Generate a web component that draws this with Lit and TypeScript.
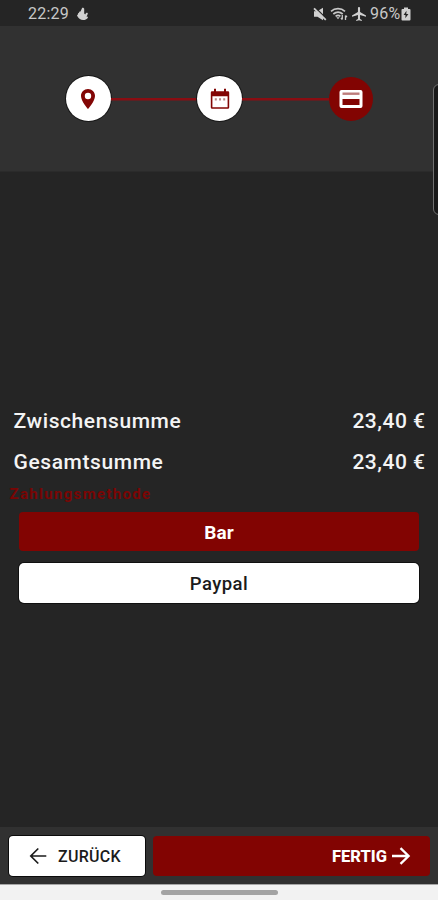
import { LitElement, html, css } from "lit";
import { customElement } from "lit/decorators.js";

@customElement("app-root")
export class AppRoot extends LitElement {
  static styles = css`
    :host {
      display: flex;
      flex-direction: column;
      position: relative;
      height: 900px;
      overflow: hidden;
      background: #252525;
      color: #f4f4f4;
      font-family: Roboto, "Noto Sans", sans-serif;
    }
    * { box-sizing: border-box; }
    svg { display: block; flex: none; }
    .status {
      height: 26px;
      flex: none;
      display: flex;
      align-items: center;
      padding: 1px 27px 0 28px;
      color: #c8c8c8;
      font-size: 16px;
    }
    .clock { width: 48px; letter-spacing: 0.2px; }
    .right { margin-left: auto; display: flex; align-items: center; gap: 3.5px; }
    .percent { margin: 0 -3px 0 0.5px; letter-spacing: 0.3px; }
    .header {
      height: 146px;
      flex: none;
      background: #313131;
      border-bottom: 1px solid #2b2b2b;
      display: flex;
      align-items: flex-start;
      padding: 50px 65.5px 0;
    }
    .step {
      width: 45px;
      height: 45px;
      flex: none;
      border-radius: 50%;
      background: #fff;
      color: #820605;
      box-shadow: 0 0 0 1px #171717;
      display: flex;
      align-items: center;
      justify-content: center;
    }
    .step.active {
      width: 44px;
      height: 44px;
      margin-top: 1px;
      background: #820402;
      color: #fff;
      box-shadow: none;
    }
    .line {
      flex: 1;
      height: 3px;
      margin-top: 21.5px;
      background: linear-gradient(#8a0d12 0 2px, #5e1f22 2px);
    }
    .main { flex: 1; padding: 238px 0 0; }
    .row {
      display: flex;
      justify-content: space-between;
      height: 41px;
      padding: 0 13px 0 13.5px;
      font-size: 21px;
      line-height: 22px;
      font-weight: 500;
      letter-spacing: 0.6px;
    }
    .amount { letter-spacing: 0.5px; margin-right: -0.5px; }
    .label {
      height: 20px;
      margin-top: -8px;
      padding-left: 9.5px;
      color: #7a0504;
      font-size: 15px;
      line-height: 20px;
      font-weight: 700;
      letter-spacing: 1.32px;
    }
    .options { display: flex; flex-direction: column; gap: 12px; padding: 8px 19px 0; }
    .option {
      height: 39px;
      border-radius: 4px;
      background: #820402;
      color: #fff;
      display: flex;
      align-items: center;
      justify-content: center;
      padding-top: 1px;
      font-size: 19px;
      font-weight: 700;
    }
    .option.plain {
      height: 40px;
      background: #fff;
      color: #1b1b1b;
      font-size: 18.5px;
      font-weight: 500;
      letter-spacing: 0.45px;
      border-radius: 5px;
      box-shadow: 0 0 0 1px #101010;
    }
    .footer {
      height: 57px;
      flex: none;
      background: #313131;
      display: flex;
      gap: 8px;
      padding: 9px 8px 0 9px;
      font-size: 16px;
    }
    .back, .done {
      height: 40px;
      border-radius: 4px;
      display: flex;
      align-items: center;
    }
    .back {
      width: 136px;
      background: #fff;
      color: #1b1b1b;
      box-shadow: 0 0 0 1px #0b0b0b;
      padding-left: 20px;
      gap: 11px;
      font-weight: 500;
      letter-spacing: 0.3px;
    }
    .done {
      flex: 1;
      background: #820402;
      color: #fff;
      justify-content: flex-end;
      padding-right: 19px;
      gap: 4px;
      font-size: 16.5px;
      font-weight: 800;
    }
    .nav {
      height: 16px;
      flex: none;
      background: #f2f2f2;
      border-top: 1px solid #a6a6a6;
      display: flex;
      justify-content: center;
      padding-top: 5px;
    }
    .handle { width: 117px; height: 5px; border-radius: 3px; background: #a3a3a3; }
    .edge {
      position: absolute;
      top: 84px;
      right: -8px;
      width: 13px;
      height: 131px;
      border: 1.5px solid #707070;
      border-radius: 6px;
      background: #191919;
    }
  `;

  render() {
    return html`
      <div class="status">
        <span class="clock">22:29</span>
        <svg width="13" height="14" viewBox="0 0 13 14" fill="#d0d0d0">
          <path d="M6.200.8c1-.4 2 .2 2 1.300v4.400l1 .9c.5-1.200 1.200-1.900 2-1.700.8.3.7 1.100.2 2l-.9 1.800 1.300.2c.7 1-.9 2.600-3.100 3.200C5.500 13.700 3 12 1.600 9.500.8 8.500 1 7.600 2 7.400c-.2-1 .3-1.600 1-1.700.1-.9.6-1.400 1.500-1.300z"/>
        </svg>
        <div class="right">
          <svg width="14" height="14" viewBox="0 0 14 14">
            <path d="M1 4.200h3.200L10 .8v12.400L4.500 9.800H1z" fill="#d0d0d0"/>
            <path d="M2.600.9l11 11" stroke="#252525" stroke-width="1.400"/>
            <path d="M1 1.300l11.800 11.500" stroke="#d0d0d0" stroke-width="1.800"/>
          </svg>
          <svg width="18" height="14" viewBox="0 0 18 14" fill="none" stroke="#c8c8c8" stroke-width="1.700">
            <path d="M1 4.300c4-3.600 10-3.600 14 0M3.300 7c3-2.500 6.500-2.500 9.400 0M5.600 9.400c1.600-1.300 3.300-1.300 4.800 0"/>
            <path d="M6.300 10.200h3.400L8 12.200z" fill="#c8c8c8" stroke="none"/>
            <path d="M12.300 8v4.500M10.900 11l1.400 1.500M15.500 13V8.500M17 10l-1.500-1.500" stroke-width="1.300"/>
          </svg>
          <svg width="14" height="14" viewBox="2 2 20 20" fill="#d0d0d0">
            <path d="M22 16v-2l-8.500-5V3.500C13.500 2.670 12.830 2 12 2s-1.500.67-1.500 1.500V9L2 14v2l8.500-2.500V19L8 20.500V22l4-1 4 1v-1.500L13.500 19v-5.500L22 16z"/>
          </svg>
          <span class="percent">96%</span>
          <svg width="10" height="14" viewBox="0 0 10 14">
            <path d="M3 .5h4v1.500h1.500q1 0 1 1v9.500q0 1-1 1H1.500q-1 0-1-1V3q0-1 1-1H3z" fill="#d0d0d0"/>
            <path d="M5.500 3.800L2.600 8h1.900l-.2 3.200L7.400 7H5.300z" fill="#252525"/>
          </svg>
        </div>
      </div>
      <div class="header">
        <div class="step">
          <svg width="24" height="24" viewBox="0 0 24 24" fill="currentColor">
            <path fill-rule="evenodd" d="M12 2C8.130 2 5 5.130 5 9c0 5.250 7 13 7 13s7-7.750 7-13c0-3.870-3.130-7-7-7zm0 10.200a3.200 3.200 0 1 1 0-6.400 3.200 3.200 0 0 1 0 6.400z"/>
          </svg>
        </div>
        <div class="line"></div>
        <div class="step">
          <svg width="20" height="22" viewBox="0 0 20 22" fill="none">
            <path d="M2 3.200h16q1.200 0 1.200 1.200v15q0 1.400-1.400 1.400H2.200q-1.400 0-1.400-1.400v-15q0-1.200 1.200-1.200zM2.400 8.200v11.100h15.200V8.200z" fill="currentColor" fill-rule="evenodd"/>
            <path d="M5 .7v3.500M15 .7v3.500" stroke="currentColor" stroke-width="2"/>
            <path d="M4.800 11.300h2M9 11.300h2M13.200 11.300h2" stroke="#b78787" stroke-width="2.200"/>
          </svg>
        </div>
        <div class="line"></div>
        <div class="step active">
          <svg width="24" height="20" viewBox="0 0 24 20">
            <path d="M2.500 1h19q2 0 2 2v14q0 2-2 2h-19q-2 0-2-2V3q0-2 2-2zM3.500 10v6h17v-6z" fill="#fff" fill-rule="evenodd"/>
            <path d="M3.500 4.700h17" stroke="#bd7c7b" stroke-width="2.400"/>
          </svg>
        </div>
      </div>
      <div class="main">
        <div class="row"><span>Zwischensumme</span><span class="amount">23,40 €</span></div>
        <div class="row"><span>Gesamtsumme</span><span class="amount">23,40 €</span></div>
        <div class="label">Zahlungsmethode</div>
        <div class="options">
          <div class="option">Bar</div>
          <div class="option plain">Paypal</div>
        </div>
      </div>
      <div class="footer">
        <div class="back">
          <svg width="18" height="18" viewBox="0 0 18 18" fill="none" stroke="currentColor" stroke-width="1.700">
            <path d="M17.300 9H2M9.300 1.500L1.800 9l7.500 7.500"/>
          </svg>
          <span>ZURÜCK</span>
        </div>
        <div class="done">
          <span>FERTIG</span>
          <svg width="20" height="18" viewBox="0 0 20 18" fill="none" stroke="currentColor" stroke-width="2.300">
            <path d="M1 9h16.500M9.500 1.200L17.600 9l-8.100 7.800"/>
          </svg>
        </div>
      </div>
      <div class="nav"><div class="handle"></div></div>
      <div class="edge"></div>
    `;
  }
}
